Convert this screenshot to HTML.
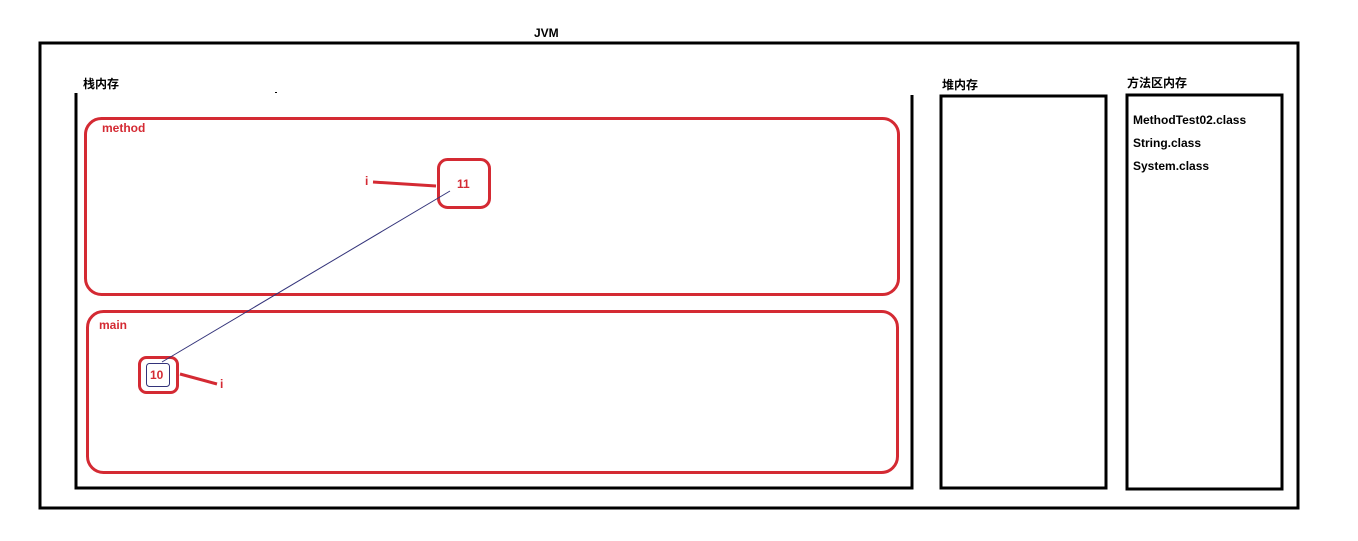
<!DOCTYPE html><html><head><style>body{margin:0;background:#fff}svg{display:block}text{font-family:"Liberation Sans","Noto Sans CJK SC",sans-serif;font-weight:bold;font-size:12px}</style></head><body>
<svg width="1358" height="541" xmlns="http://www.w3.org/2000/svg">
<rect width="1358" height="541" fill="#fff"/>
<text x="534" y="37" fill="#000">JVM</text>
<rect x="40" y="43" width="1258" height="465" fill="none" stroke="#000" stroke-width="3"/>
<text x="83" y="88" fill="#000">栈内存</text>
<path d="M76 93V488H912V95" fill="none" stroke="#000" stroke-width="3"/>
<rect x="275" y="92" width="2" height="1" fill="#000"/>
<text x="942" y="89" fill="#000">堆内存</text>
<rect x="941" y="96" width="165" height="392" fill="none" stroke="#000" stroke-width="3"/>
<text x="1127" y="87" fill="#000">方法区内存</text>
<rect x="1127" y="95" width="155" height="394" fill="none" stroke="#000" stroke-width="3"/>
<text x="1133" y="124" fill="#000">MethodTest02.class</text>
<text x="1133" y="147" fill="#000">String.class</text>
<text x="1133" y="170" fill="#000">System.class</text>
<rect x="85.5" y="118.5" width="813" height="176" rx="16" fill="none" stroke="#d42a33" stroke-width="3"/>
<text x="102" y="132" fill="#d42a33">method</text>
<rect x="87.5" y="311.5" width="810" height="161" rx="16" fill="none" stroke="#d42a33" stroke-width="3"/>
<text x="99" y="329" fill="#d42a33">main</text>
<rect x="438.5" y="159.5" width="51" height="48" rx="9" fill="none" stroke="#d42a33" stroke-width="3"/>
<text x="457" y="188" fill="#d42a33">11</text>
<text x="365" y="185" fill="#d42a33">i</text>
<path d="M373 182L436 186" stroke="#d42a33" stroke-width="3"/>
<rect x="139.5" y="357.5" width="38" height="35" rx="7" fill="none" stroke="#d42a33" stroke-width="3"/>
<rect x="146.5" y="363.5" width="23" height="23" rx="3" fill="none" stroke="#33337a" stroke-width="1"/>
<text x="150" y="379" fill="#d42a33">10</text>
<path d="M180 374L217 384" stroke="#d42a33" stroke-width="3"/>
<text x="220" y="388" fill="#d42a33">i</text>
<path d="M450 191L162 362" stroke="#33337a" stroke-width="1"/>
</svg></body></html>
